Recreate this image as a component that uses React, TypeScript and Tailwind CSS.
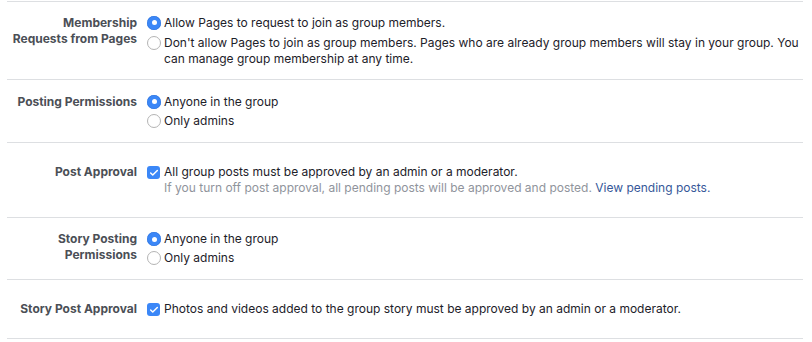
import { Check } from 'lucide-react';

type Option = { label: string; checked?: boolean };

function Radio({ checked }: { checked?: boolean }) {
  return checked ? (
    <span className="mt-[1px] flex h-[14px] w-[14px] shrink-0 items-center justify-center rounded-full bg-[#3b87f7] shadow-[inset_0_0_0_0.5px_#2f74dd]">
      <span className="h-[5px] w-[5px] rounded-full bg-white" />
    </span>
  ) : (
    <span className="mt-[1px] h-[14px] w-[14px] shrink-0 rounded-full border border-[#b4b4b4] bg-white" />
  );
}

function Checkbox() {
  return (
    <span className="mt-[2px] flex h-[13px] w-[13px] shrink-0 items-center justify-center rounded-[3px] bg-[#3b87f7]">
      <Check size={10} strokeWidth={3.5} className="text-white" />
    </span>
  );
}

function RadioGroup({ options }: { options: Option[] }) {
  return (
    <div className="flex flex-col gap-[3px]">
      {options.map((o) => (
        <label key={o.label} className="flex items-start gap-[3px] text-[#1d2129]">
          <Radio checked={o.checked} />
          <span>{o.label}</span>
        </label>
      ))}
    </div>
  );
}

function Row({ label, height, children }: { label: string[]; height: string; children: React.ReactNode }) {
  return (
    <div className={`flex items-center border-b border-[#dddfe2] ${height}`}>
      <div className="flex w-full items-start gap-[10px]">
        <div className="w-[130px] shrink-0 text-right font-bold text-[#4b4f56]">
          {label.map((l) => (
            <div key={l}>{l}</div>
          ))}
        </div>
        <div className="flex-1">{children}</div>
      </div>
    </div>
  );
}

export default function App() {
  return (
    <div className="h-[342px] w-[812px] bg-white pt-px text-[12px] leading-4 [font-family:Inter,'Liberation_Sans',Arial,sans-serif]">
      <div className="ml-[7px] w-[796px] border-t border-[#dddfe2]">
        <Row label={['Membership', 'Requests from Pages']} height="h-[78px]">
          <div className="flex flex-col gap-1">
            <label className="flex items-start gap-[3px] text-[#1d2129]">
              <Radio checked />
              <span>Allow Pages to request to join as group members.</span>
            </label>
            <label className="flex items-start gap-[3px] text-[#1d2129]">
              <Radio />
              <span>
                Don't allow Pages to join as group members. Pages who are already group members will stay in your
                group. You can manage group membership at any time.
              </span>
            </label>
          </div>
        </Row>
        <Row label={['Posting Permissions']} height="h-[63px]">
          <RadioGroup options={[{ label: 'Anyone in the group', checked: true }, { label: 'Only admins' }]} />
        </Row>
        <Row label={['Post Approval']} height="h-[75px]">
          <div className="flex items-start gap-[4px] text-[#1d2129]">
            <Checkbox />
            <div>
              <div>All group posts must be approved by an admin or a moderator.</div>
              <div className="text-[#90949c]">
                If you turn off post approval, all pending posts will be approved and posted.{' '}
                <a className="text-[#365899]">View pending posts.</a>
              </div>
            </div>
          </div>
        </Row>
        <Row label={['Story Posting', 'Permissions']} height="h-[62px]">
          <RadioGroup options={[{ label: 'Anyone in the group', checked: true }, { label: 'Only admins' }]} />
        </Row>
        <Row label={['Story Post Approval']} height="h-[59px]">
          <div className="flex items-start gap-[4px] text-[#1d2129]">
            <Checkbox />
            <span>Photos and videos added to the group story must be approved by an admin or a moderator.</span>
          </div>
        </Row>
      </div>
    </div>
  );
}
